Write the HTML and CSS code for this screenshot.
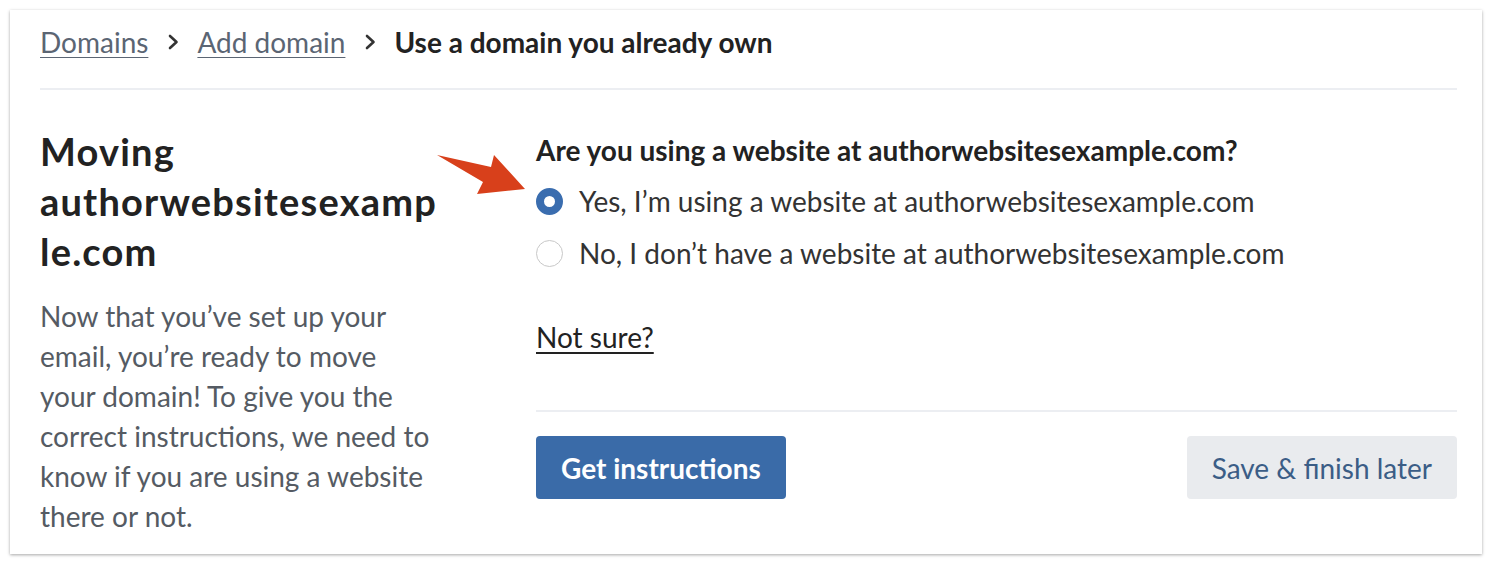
FILE: index.html
```html
<!DOCTYPE html>
<html lang="en">
<head>
    <meta charset="UTF-8">
    <meta name="viewport" content="width=device-width, initial-scale=1.0">
    <title>Use a domain you already own</title>
    <link rel="stylesheet" href="styles.css">
</head>
<body>
    <div class="card">
        <nav class="breadcrumb">
            <a href="#">Domains</a>
            <svg class="sep" width="11" height="16" viewBox="0 0 11 16"><polyline points="2,2 8.5,8 2,14" fill="none" stroke="#333" stroke-width="2.6" stroke-linecap="round" stroke-linejoin="round"/></svg>
            <a href="#">Add domain</a>
            <svg class="sep" width="11" height="16" viewBox="0 0 11 16"><polyline points="2,2 8.5,8 2,14" fill="none" stroke="#333" stroke-width="2.6" stroke-linecap="round" stroke-linejoin="round"/></svg>
            <span class="current">Use a domain you already own</span>
        </nav>

        <div class="main">
            <div class="intro">
                <h1>Moving authorwebsitesexample.com</h1>
                <p>Now that you’ve set up your email, you’re ready to move your domain! To give you the correct instructions, we need to know if you are using a website there or not.</p>
            </div>

            <div class="form">
                <h2>Are you using a website at authorwebsitesexample.com?</h2>
                <label class="option">
                    <span class="radio checked"></span>
                    Yes, I’m using a website at authorwebsitesexample.com
                </label>
                <label class="option">
                    <span class="radio"></span>
                    No, I don’t have a website at authorwebsitesexample.com
                </label>
                <a href="#" class="not-sure">Not sure?</a>

                <div class="actions">
                    <button class="primary">Get instructions</button>
                    <button class="secondary">Save &amp; finish later</button>
                </div>
            </div>
        </div>

        <!-- annotation arrow -->
        <svg class="arrow" width="100" height="50" viewBox="0 0 100 50">
            <polygon points="1,5 55,17 58,5 89,39 41,44 47,32" fill="#d8401b"/>
        </svg>
    </div>
</body>
</html>
```

FILE: styles.css
```css
body {
    margin: 0;
    background-color: #fff;
    font-family: Lato, "Liberation Sans", sans-serif;
    color: #2b2b2b;
}

.card {
    position: relative;
    box-sizing: border-box;
    margin: 10px;
    width: 1472px;
    height: 544px;
    padding: 0 25px 0 30px;
    background-color: #fff;
    box-shadow: 0 1px 3px rgba(0,0,0,0.35);
}

.breadcrumb {
    display: flex;
    align-items: center;
    height: 64px;
    padding-bottom: 14px;
    border-bottom: 2px solid #eceef2;
    font-size: 28px;
}

.breadcrumb a {
    color: #5b6573;
    text-decoration: underline;
    text-underline-offset: 4px;
    text-decoration-thickness: 1px;
}

.breadcrumb .sep {
    margin: 0 18px 0 20px;
}

.breadcrumb .current {
    font-weight: 700;
    color: #222;
}

.main {
    display: flex;
}

.intro {
    width: 400px;
    margin-right: 96px;
    flex-shrink: 0;
}

.intro h1 {
    width: 400px;
    margin: 36px 0 0;
    font-size: 38px;
    line-height: 50px;
    font-weight: 700;
    letter-spacing: 1.2px;
    color: #222;
    overflow-wrap: anywhere;
}

.intro p {
    width: 393px;
    margin: 20px 0 0;
    font-size: 28px;
    line-height: 40px;
    color: #555b63;
}

.form {
    flex: 1;
    padding-top: 43px;
}

.form h2 {
    margin: 0 0 8px;
    font-size: 28px;
    line-height: 34px;
    font-weight: 700;
    color: #222;
}

.option {
    display: flex;
    align-items: center;
    gap: 16px;
    height: 52px;
    font-size: 28px;
    color: #333;
}

.radio {
    box-sizing: border-box;
    width: 27px;
    height: 27px;
    border-radius: 50%;
    border: 1.5px solid #c8c8c8;
    background-color: #fff;
}

.radio.checked {
    border: 8px solid #3a6daf;
}

.not-sure {
    display: inline-block;
    margin-top: 41px;
    font-size: 28px;
    line-height: 34px;
    color: #222;
    text-decoration: underline;
    text-underline-offset: 4px;
}

.actions {
    display: flex;
    justify-content: space-between;
    margin-top: 56px;
    padding-top: 24px;
    border-top: 2px solid #eceef2;
}

.actions button {
    height: 63px;
    padding: 0 25px;
    border: none;
    border-radius: 4px;
    font-family: inherit;
    font-size: 28px;
    cursor: pointer;
}

.primary {
    background-color: #3a6ba8;
    color: #fff;
    font-weight: 700;
}

.secondary {
    background-color: #e9ebee;
    color: #3b5d86;
}

.arrow {
    position: absolute;
    left: 426px;
    top: 140px;
}
```
